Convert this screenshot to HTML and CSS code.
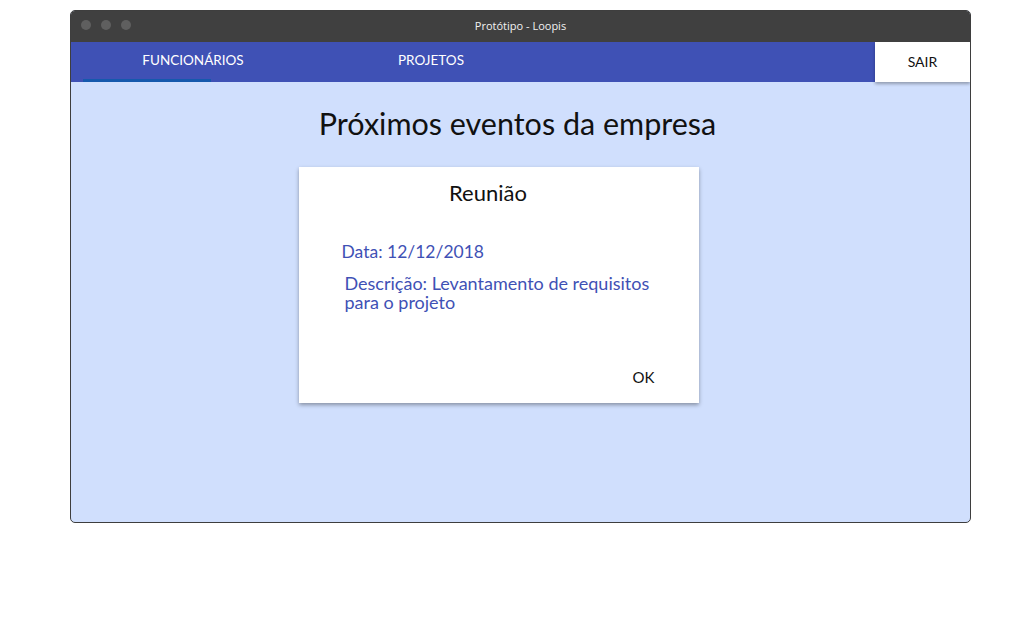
FILE: index.html
```html
<!DOCTYPE html>
<html lang="pt">
<head>
<meta charset="utf-8">
<title>Protótipo - Loopis</title>
<link rel="stylesheet" href="styles.css">
</head>
<body>
<div class="window">
  <div class="titlebar">
    <div class="dots"><span class="dot"></span><span class="dot"></span><span class="dot"></span></div>
    <div class="title">Protótipo - Loopis</div>
  </div>
  <div class="navbar">
    <div class="tab active">FUNCIONÁRIOS</div>
    <div class="tab">PROJETOS</div>
    <div class="spacer"></div>
    <div class="logout">SAIR</div>
  </div>
  <div class="content">
    <h1 class="heading">Próximos eventos da empresa</h1>
    <div class="card">
      <div class="card-title">Reunião</div>
      <div class="date">Data: 12/12/2018</div>
      <div class="desc">Descrição: Levantamento de requisitos<br>para o projeto</div>
      <div class="actions"><span class="ok">OK</span></div>
    </div>
  </div>
</div>
</body>
</html>
```
FILE: styles.css
```css
* { box-sizing: border-box; }
html, body { margin: 0; padding: 0; background: #ffffff; }
body { font-family: "Lato", "Noto Sans", sans-serif; padding: 10px 0 0 70px; }
.window {
  width: 901px;
  height: 513px;
  display: flex;
  flex-direction: column;
  border-radius: 5px;
  overflow: hidden;
  border: 1px solid #3e3e3e;
  background: #d0dffd;
}
.titlebar {
  height: 31px;
  background: #404040;
  position: relative;
  display: flex;
  align-items: center;
  justify-content: center;
  flex-shrink: 0;
}
.dots { position: absolute; left: 10px; top: 9px; display: flex; gap: 10px; }
.dot { width: 10px; height: 10px; border-radius: 50%; background: #5f5f5f; }
.title { color: #f2f2f2; font-size: 11px; font-family: "Open Sans", sans-serif; margin-top: -3px; }
.navbar {
  height: 40px;
  background: #3f51b5;
  display: flex;
  align-items: stretch;
  flex-shrink: 0;
}
.tab {
  position: relative;
  color: #ffffff;
  font-size: 13.5px;
  display: flex;
  align-items: center;
  justify-content: center;
  padding-bottom: 4px;
  margin-left: 12px;
  width: 220px;
}
.tab.active::after {
  content: "";
  position: absolute;
  left: 0;
  bottom: 0;
  width: 128px;
  height: 3px;
  background: #1559ad;
}
.tab + .tab { margin-left: 18px; }
.spacer { flex: 1; }
.logout {
  width: 95px;
  background: #ffffff;
  color: #111;
  font-size: 14px;
  display: flex;
  align-items: center;
  justify-content: center;
  padding-bottom: 1px;
  box-shadow: 0 2px 3px rgba(0,0,0,0.3);
}
.content {
  flex: 1;
  display: flex;
  flex-direction: column;
  align-items: center;
}
.heading {
  margin: 22px 6px 0 0;
  font-weight: 400;
  font-size: 30.5px;
  color: #111;
  line-height: 38px;
}
.card {
  margin-top: 25px;
  margin-left: -44px;
  width: 400px;
  height: 236px;
  background: #ffffff;
  box-shadow: 0 2px 4px rgba(0,0,0,0.35);
  display: flex;
  flex-direction: column;
  padding: 12px 44px 0 43px;
}
.card-title { text-align: center; font-size: 22px; color: #111; line-height: 28px; padding-right: 20px; }
.date { margin-top: 33px; font-size: 17.5px; color: #3f51b5; line-height: 24px; }
.desc { margin-top: 10px; margin-left: 3px; font-size: 18px; color: #3f51b5; line-height: 19px; }
.actions { margin-top: auto; margin-bottom: 17px; display: flex; justify-content: flex-end; }
.ok { font-size: 15px; color: #111; }
```
